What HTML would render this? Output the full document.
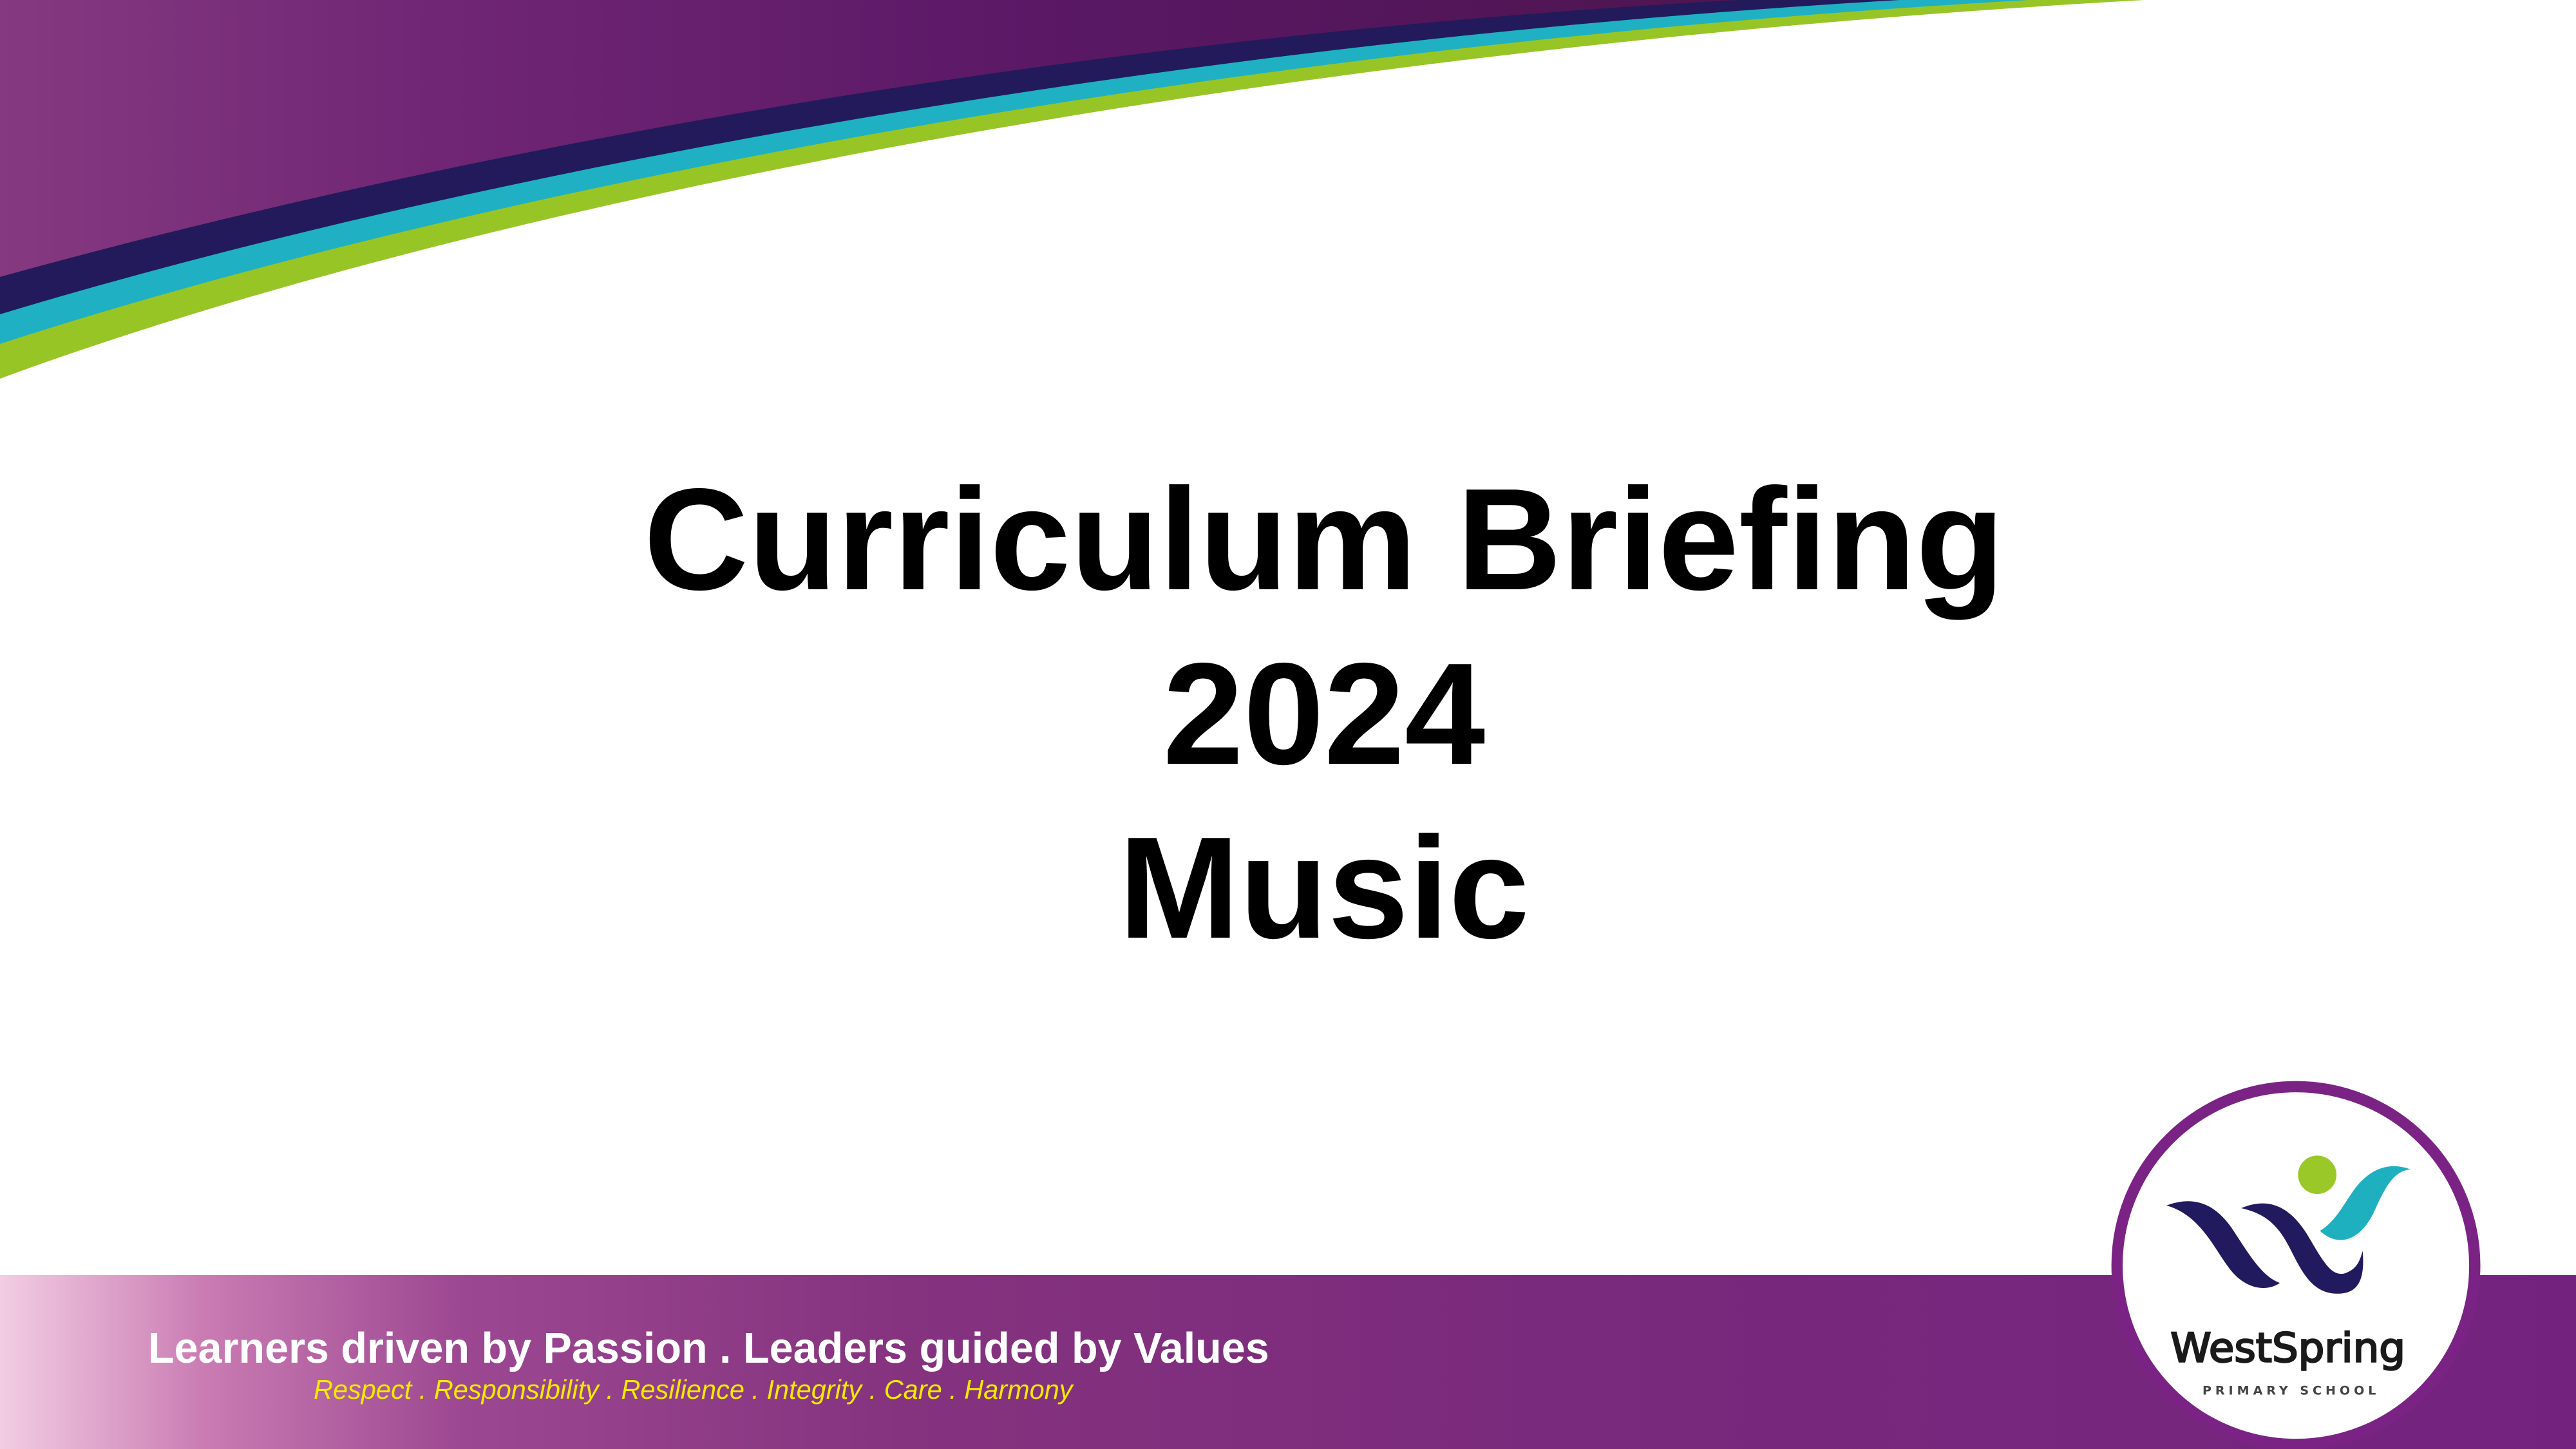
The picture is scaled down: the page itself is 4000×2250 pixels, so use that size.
<!DOCTYPE html>
<html><head><meta charset="utf-8"><style>
html,body{margin:0;padding:0;}
body{width:4000px;height:2250px;position:relative;overflow:hidden;background:#fff;font-family:"Liberation Sans",Arial,sans-serif;}
.t{position:absolute;left:0;width:4112px;text-align:center;font-weight:bold;font-size:225px;color:#000;line-height:1;}
.band{position:absolute;left:0;top:1980px;width:4000px;height:270px;background:linear-gradient(90deg,#f2cde3 0%,#c97bb2 8%,#9c4791 18%,#85337f 35%,#7a2a7c 60%,#73237e 100%);}
.l1{position:absolute;left:230px;top:2056px;font-size:66.5px;font-weight:bold;color:#fff;white-space:nowrap;}
.l2{position:absolute;left:487px;top:2134px;font-size:41.5px;font-style:italic;color:#f2ea00;white-space:nowrap;}
</style></head><body>
<svg style="position:absolute;left:0;top:0" width="4000" height="700" viewBox="0 0 4000 700">
<defs><linearGradient id="pg" x1="0" x2="1" y1="0" y2="0">
<stop offset="0" stop-color="#853980"/><stop offset="0.25" stop-color="#702675"/><stop offset="0.6" stop-color="#5a1865"/><stop offset="1" stop-color="#4e1550"/></linearGradient></defs>
<path d="M0,588 C700,330 1900,80 3330,0 L0,0 Z" fill="#98c526"/>
<path d="M0,534 C690,310 1830,75 3150,0 L0,0 Z" fill="#1fb0c4"/>
<path d="M0,488 C670,285 1750,70 2950,0 L0,0 Z" fill="#221a5a"/>
<path d="M0,430 C650,250 1600,60 2700,0 L0,0 Z" fill="url(#pg)"/>
</svg>
<div class="t" style="top:725px">Curriculum Briefing</div>
<div class="t" style="top:996px">2024</div>
<div class="t" style="top:1266px">Music</div>
<div class="band"></div>
<div class="l1">Learners driven by Passion . Leaders guided by Values</div>
<div class="l2">Respect . Responsibility . Resilience . Integrity . Care . Harmony</div>
<svg style="position:absolute;left:3250px;top:1650px" width="650" height="600" viewBox="0 0 1568 1447">
<circle cx="760" cy="760" r="670" fill="#fff" stroke="#7a2385" stroke-width="42"/>
<circle cx="840" cy="420" r="72" fill="#9bc829"/>
<path d="M275,535 C370,500 450,520 520,620 C580,710 630,800 700,825 C650,860 570,850 510,770 C450,690 400,570 275,535 Z" fill="#221a5e"/>
<path d="M555,545 C650,505 730,530 800,640 C860,740 890,800 940,790 C990,775 1000,740 1010,705 C1020,820 990,870 905,865 C820,860 780,780 740,700 C690,600 640,565 555,545 Z" fill="#221a5e"/>
<path d="M850,630 C900,600 925,555 965,495 C1025,400 1105,368 1190,400 C1120,405 1090,480 1050,565 C1000,665 920,695 850,630 Z" fill="#1fb0c0"/>
<text x="290" y="1120" textLength="880" lengthAdjust="spacingAndGlyphs" font-family="DejaVu Sans,sans-serif" font-size="150" fill="#1a1a1a" stroke="#1a1a1a" stroke-width="6">WestSpring</text>
<text x="410" y="1243" textLength="650" lengthAdjust="spacing" font-family="DejaVu Sans,sans-serif" font-size="46" font-weight="bold" fill="#444">PRIMARY SCHOOL</text>
</svg>
</body></html>
